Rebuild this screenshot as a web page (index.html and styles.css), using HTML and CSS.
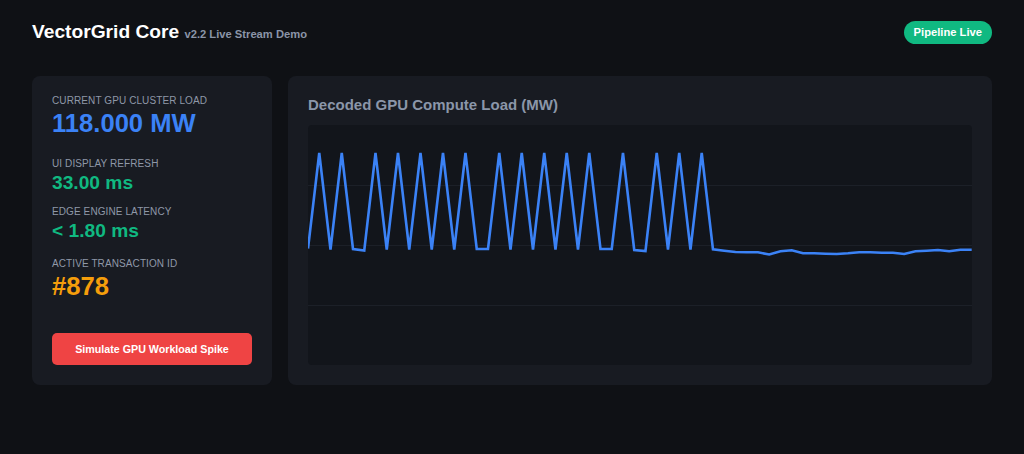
FILE: index.html
```html
<!DOCTYPE html>
<html lang="en">
<head>
    <meta charset="UTF-8">
    <meta name="viewport" content="width=device-width, initial-scale=1.0">
    <title>VectorGrid Core</title>
    <link rel="stylesheet" href="styles.css">
</head>
<body>
    <header class="topbar">
        <h1 class="brand">VectorGrid Core <span class="version">v2.2 Live Stream Demo</span></h1>
        <span class="status">Pipeline Live</span>
    </header>

    <main class="layout">
        <section class="panel stats">
            <div class="metric metric-load">
                <div class="label">Current GPU Cluster Load</div>
                <div class="value big blue" id="load">118.000 MW</div>
            </div>
            <div class="metric metric-refresh">
                <div class="label">UI Display Refresh</div>
                <div class="value green">33.00 ms</div>
            </div>
            <div class="metric metric-latency">
                <div class="label">Edge Engine Latency</div>
                <div class="value green">&lt; 1.80 ms</div>
            </div>
            <div class="metric">
                <div class="label">Active Transaction ID</div>
                <div class="value big orange" id="tx">#878</div>
            </div>
            <button class="spike" id="spike">Simulate GPU Workload Spike</button>
        </section>

        <section class="panel chart-panel">
            <h2 class="chart-title">Decoded GPU Compute Load (MW)</h2>
            <div class="chart">
                <svg width="664" height="240" viewBox="0 0 664 240">
                    <line class="grid" x1="0" y1="60.5" x2="664" y2="60.5" />
                    <line class="grid" x1="0" y1="120.5" x2="664" y2="120.5" />
                    <line class="grid" x1="0" y1="180.5" x2="664" y2="180.5" />
                    <polyline class="trace" id="trace" points="" />
                </svg>
            </div>
        </section>
    </main>

    <script>
        // last 60 samples, already mapped to chart pixels (0 = top of plot)
        const samples = [
            123.5, 28, 124.5, 28, 124, 125.5, 28, 124.5, 28, 124.5,
            28, 124.5, 28, 124.5, 28, 124, 124, 28, 124.5, 28,
            124.5, 28, 124.5, 28, 124.5, 28, 124, 124, 28, 125,
            126, 28, 124.5, 28, 124.5, 28, 124.3, 125.7, 127, 127.3,
            127.3, 129.5, 126.3, 125.3, 128.3, 128.3, 128.7, 129, 128.3, 127.3,
            127.3, 127.7, 127.7, 129, 126.3, 125.7, 125, 126.3, 124.7, 124.7
        ];

        const trace = document.getElementById('trace');
        const step = 664 / (samples.length - 1) - 0.005;

        function draw() {
            trace.setAttribute('points', samples.map((y, i) => `${(i * step).toFixed(2)},${y}`).join(' '));
        }

        draw();

        document.getElementById('spike').addEventListener('click', () => {
            samples.shift();
            samples.push(28);
            draw();
        });
    </script>
</body>
</html>
```

FILE: styles.css
```css
body {
    font-family: "Liberation Sans", Arial, sans-serif;
    background-color: #0f1115;
    color: #fff;
    margin: 0;
    padding: 20px 32px;
}

.topbar {
    display: flex;
    justify-content: space-between;
    align-items: center;
    height: 24px;
    margin-bottom: 32px;
}

.brand {
    margin: 0;
    font-size: 19.2px;
    font-weight: bold;
    color: #fff;
}

.version {
    font-size: 11.2px;
    color: #8b95a8;
}

.status {
    background: #10b981;
    color: #fff;
    font-size: 11.2px;
    font-weight: bold;
    line-height: 13px;
    padding: 5px 10px;
    border-radius: 999px;
}

.layout {
    display: grid;
    grid-template-columns: 240px 1fr;
    gap: 16px;
}

.panel {
    background: #181b22;
    border-radius: 8px;
    padding: 20px;
}

.stats {
    display: flex;
    flex-direction: column;
    padding-top: 19px;
}

.label {
    font-size: 10px;
    line-height: 12px;
    letter-spacing: 0.1px;
    text-transform: uppercase;
    color: #8f98a8;
    margin-bottom: 1px;
}

.value {
    font-weight: bold;
    font-size: 19.2px;
    line-height: 24px;
}

.value.big {
    font-size: 25.6px;
    line-height: 30px;
}

.blue {
    color: #3b82f6;
}

.green {
    color: #10b981;
}

.orange {
    color: #f59e0b;
}

.metric-load {
    margin-bottom: 20px;
}

.metric-refresh {
    margin-bottom: 11px;
}

.metric-latency {
    margin-bottom: 15px;
}

.spike {
    margin-top: auto;
    height: 32px;
    background: #ef4444;
    color: #fff;
    border: none;
    border-radius: 5px;
    font-family: inherit;
    font-size: 10.7px;
    font-weight: bold;
    cursor: pointer;
}

.spike:hover {
    background: #dc2626;
}

.chart-title {
    margin: 0 0 11px;
    font-size: 15px;
    line-height: 18px;
    font-weight: bold;
    color: #8b96a9;
}

.chart {
    height: 240px;
    background: #12151b;
    border-radius: 4px;
}

.chart svg {
    display: block;
}

.grid {
    stroke: #1c2028;
    stroke-width: 1;
}

.trace {
    fill: none;
    stroke: #3b82f6;
    stroke-width: 2.6;
}
```
